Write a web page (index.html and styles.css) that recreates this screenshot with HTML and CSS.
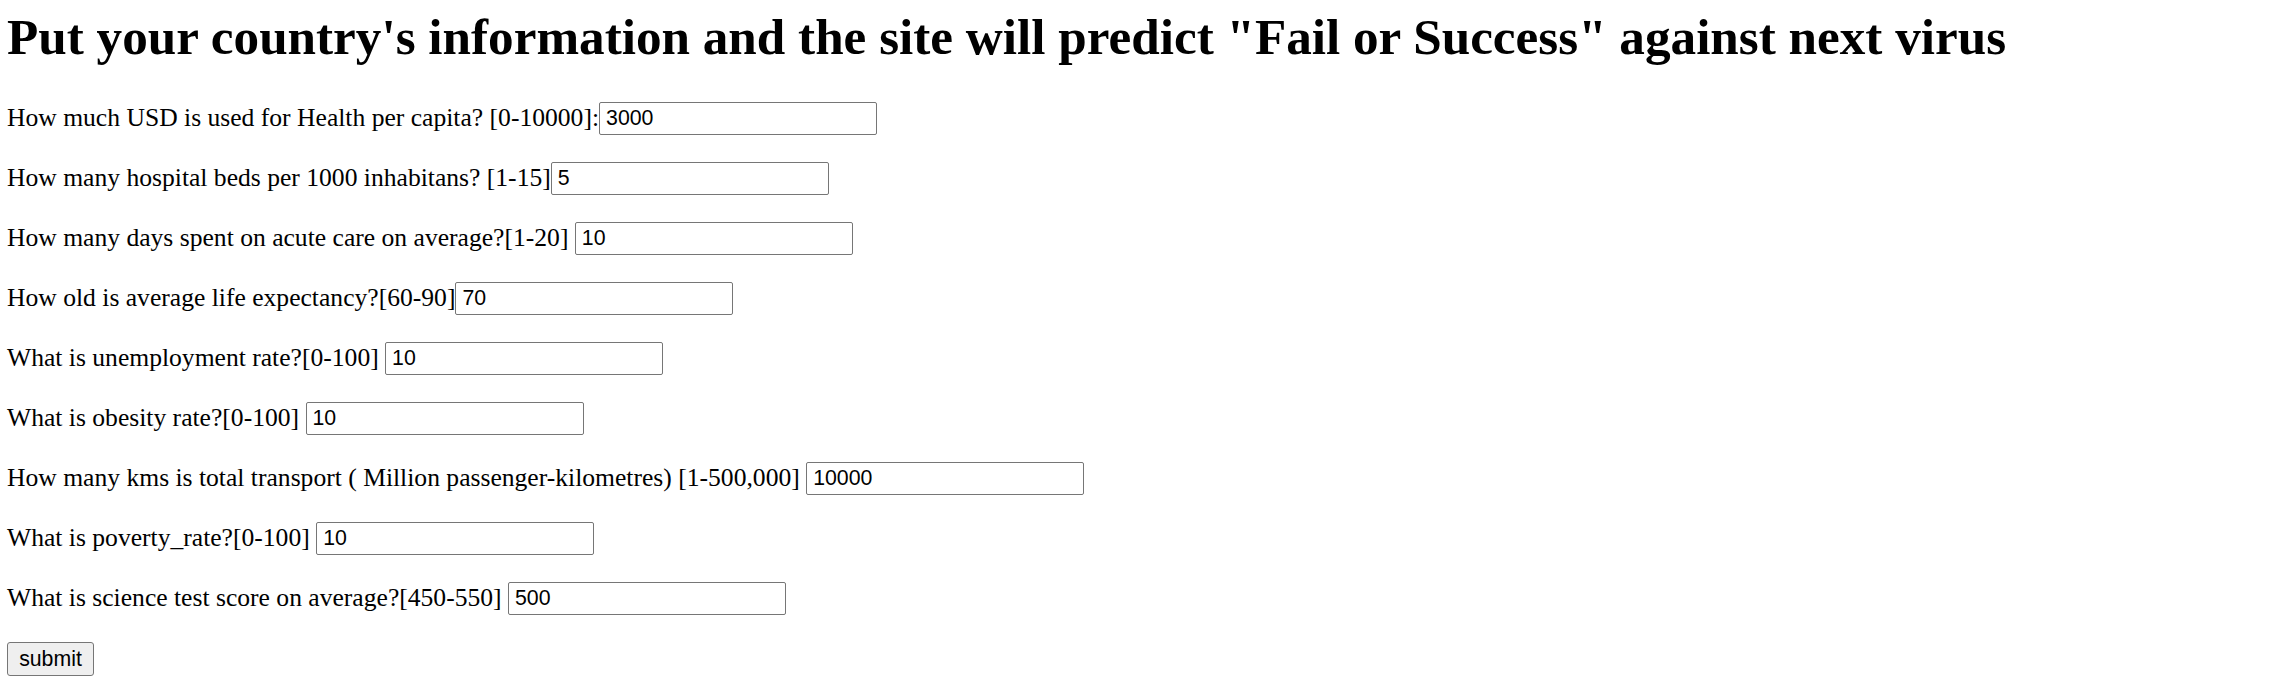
FILE: index.html
```html
<!DOCTYPE html>
<html>
<head>
<meta charset="utf-8">
<title>Predict</title>
<link rel="stylesheet" href="styles.css">
</head>
<body>
<h1 class="title">Put your country's information and the site will predict "Fail or Success" against next virus</h1>
<form class="form">
  <div class="row">How much USD is used for Health per capita? [0-10000]:<input class="field" type="text" value="3000"></div>
  <div class="row">How many hospital beds per 1000 inhabitans? [1-15]<input class="field" type="text" value="5"></div>
  <div class="row">How many days spent on acute care on average?[1-20] <input class="field" type="text" value="10"></div>
  <div class="row">How old is average life expectancy?[60-90]<input class="field" type="text" value="70"></div>
  <div class="row">What is unemployment rate?[0-100] <input class="field" type="text" value="10"></div>
  <div class="row">What is obesity rate?[0-100] <input class="field" type="text" value="10"></div>
  <div class="row">How many kms is total transport ( Million passenger-kilometres) [1-500,000] <input class="field" type="text" value="10000"></div>
  <div class="row">What is poverty_rate?[0-100] <input class="field" type="text" value="10"></div>
  <div class="row">What is science test score on average?[450-550] <input class="field" type="text" value="500"></div>
  <div class="row"><button class="submit" type="button">submit</button></div>
</form>
</body>
</html>
```
FILE: styles.css
```css
html, body {
  margin: 0;
  background: #ffffff;
  color: #000000;
}
body {
  padding: 7px 7px 0 7px;
  font-family: "Liberation Serif", "Times New Roman", serif;
  font-size: 25.6px;
}
.title {
  margin: 0 0 36px 0;
  font-size: 51.2px;
  font-weight: bold;
  line-height: normal;
}
.form {
  margin: 0;
}
.row {
  height: 33px;
  margin: 0 0 27px 0;
  white-space: nowrap;
}
.field {
  box-sizing: border-box;
  width: 278px;
  height: 33px;
  margin: 0;
  padding: 0 3px 0 6px;
  border: 1px solid #767676;
  border-radius: 2px;
  font-family: "Liberation Sans", Arial, sans-serif;
  font-size: 21.3px;
  color: #000;
  background: #fff;
  vertical-align: 1px;
}
.submit {
  box-sizing: border-box;
  width: 87px;
  height: 34px;
  margin: 0;
  padding: 0;
  border: 1px solid #767676;
  border-radius: 3px;
  background: #efefef;
  font-family: "Liberation Sans", Arial, sans-serif;
  font-size: 21.3px;
  color: #000;
}
```
